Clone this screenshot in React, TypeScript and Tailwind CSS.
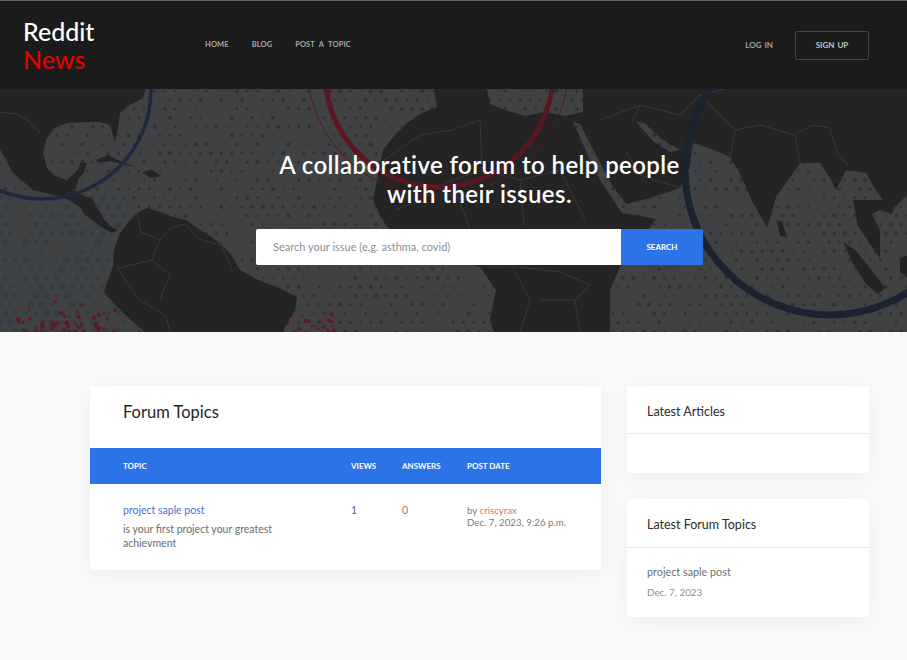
const font = "font-['Lato','Noto_Sans',sans-serif]";

// small seeded generator so the dot field is the same on every load
function rng(seed: number) {
  let s = seed;
  return () => {
    s = (s * 16807) % 2147483647;
    return s / 2147483647;
  };
}

type Dot = { x: number; y: number; r: number; fill: string };

function oceanDots(): Dot[] {
  const rand = rng(4177);
  const dots: Dot[] = [];
  for (let row = 0; row < 29; row++) {
    for (let col = 0; col < 90; col++) {
      const x = col * 10.3 + (row % 2 ? 5.15 : 0);
      const y = 91 + row * 8.9;
      const v = rand();
      const big = x < 130 && y > 190 ? 1.8 : 1;
      const r = v < 0.3 ? 0 : (0.8 + rand() * 1.3) * big;
      if (r === 0) continue;
      dots.push({ x, y, r, fill: big > 1 ? "#333d46" : "#2f3133" });
    }
  }
  return dots;
}

function splatter(): Dot[] {
  const rand = rng(991);
  const dots: Dot[] = [];
  for (let i = 0; i < 90; i++) {
    const left = i < 65;
    dots.push({
      x: left ? 18 + rand() * 100 : 285 + rand() * 50,
      y: left ? 332 - rand() * rand() * 36 : 332 - rand() * rand() * 22,
      r: 0.6 + rand() * 1.9,
      fill: "#5c1a26",
    });
  }
  return dots;
}

const ocean = oceanDots();
const blood = splatter();

function WorldMap() {
  return (
    <svg
      className="absolute inset-0 h-full w-full blur-[0.5px]"
      viewBox="0 89 907 243"
      preserveAspectRatio="none"
    >
      <rect x="-5" y="84" width="917" height="253" fill="#404142" />
      {ocean.map((d, i) => (
        <circle key={i} cx={d.x} cy={d.y} r={d.r} fill={d.fill} />
      ))}
      {blood.map((d, i) => (
        <circle key={i} cx={d.x} cy={d.y} r={d.r} fill={d.fill} />
      ))}
      <g fill="#242424">
        {/* north + central america */}
        <path d="M-5 84H147L143 98L128 106L120 113L118 128L115 143L110 125L100 122L90 122L67 123L54 128L46 140L43 153L47 168L55 176L67 180L78 170L80 163L87 163L84 172L78 180L75 190L84 196L92 198L97 207L103 218L110 226L118 230L112 233L100 226L92 220L84 214L80 207L63 197L33 190L13 173L-5 140Z" />
        <path d="M96 160L108 155L122 162L136 167L126 165L110 161L100 163Z" />
        <path d="M142 172L152 170L162 176L150 178Z" />
        {/* south america */}
        <path d="M120 233L130 220L137 213L147 208L160 212L173 217L186 220L200 230L216 240L230 253L240 270L258 280L277 287L297 297L295 310L290 318L280 337H170L150 337L120 310L104 292L108 280L113 267L114 250Z" />
        {/* africa + eurasia, seas cut out by even-odd */}
        <path
          fillRule="evenodd"
          d="M433 84L437 107L420 114L407 123L395 135L383 150L378 175L373 200L380 215L387 227L420 250L480 267L496 290L490 320L495 337H610L610 290L620 267L640 240L656 219L640 216L622 213L600 180L590 160L573 122L580 124L596 155L612 185L626 204L650 198L668 192L680 188L690 165L693 143L712 149L730 157L738 170L743 180L753 203L767 227L772 212L776 197L788 180L800 163L820 163L830 178L836 190L846 170L866 173L876 190L883 200L895 207L912 190V84ZM486 84H583L583 112L565 116L545 112L525 116L505 110L490 104ZM636 122L645 123L660 138L680 150L670 152L654 142Z"
        />
        {/* sri lanka, malay peninsula, sumatra, java */}
        <path d="M777 220L782 222L787 237L780 236Z" />
        <path d="M853 200H897L892 214L880 210L872 214L880 230L880 258L870 244L858 226Z" />
        <path d="M843 242L855 250L870 268L885 288L878 294L866 284L852 262Z" />
        <path d="M900 258L912 254V282L900 272Z" />
      </g>
      <g fill="none" stroke="#383838" strokeWidth="1">
        <path d="M0 112L17 114L30 122L40 133M65 197L73 190L86 196" />
        <path d="M137 213L141 232L160 240L170 228L186 224L197 238L222 246M160 240L152 260L118 268L128 285L140 300L166 316L170 332M152 260L170 275L160 300M222 246L232 270" />
        <path d="M384 160L420 135L452 130L480 120L482 170L452 180L420 200L395 210M482 170L520 180L560 170L590 160M452 180L470 230M520 180L524 225M560 170L585 220" />
        <path d="M480 267L512 266L560 272L590 285L575 300L580 332M512 266L530 300L520 332M540 300L575 300" />
        <path d="M600 120L640 105L680 115L700 95L725 89M625 150L640 175L680 188M640 105L632 122M700 95L735 130L730 157M735 130L760 125L795 135L812 125L830 128L838 155L848 165M795 135L800 163M860 175L870 195" />
      </g>
      <g fill="none">
        <circle cx="42" cy="90" r="109" stroke="#1f2841" strokeWidth="3.5" />
        <circle cx="439" cy="73" r="114" stroke="#591722" strokeWidth="5" />
        <circle cx="438" cy="65" r="131" stroke="#591722" strokeWidth="1" />
        <circle cx="830" cy="170" r="145" stroke="#1b2331" strokeWidth="7" />
      </g>
    </svg>
  );
}

function Header() {
  return (
    <header className="flex h-[89px] items-center border-t border-[#666666] bg-[#1b1b1b] pl-[23px] pr-[38px]">
      <a className="w-[182px] text-[25px] font-medium leading-[28px] text-white">
        Reddit
        <br />
        <span className="text-[#e60000]">News</span>
      </a>
      <nav className="flex gap-[23px] text-[7.5px] font-bold uppercase tracking-[0.1px] text-[#a8a8a8] [word-spacing:2.5px]">
        <a>Home</a>
        <a>Blog</a>
        <a>Post a topic</a>
      </nav>
      <div className="ml-auto flex items-center gap-[22px] text-[8px] font-bold uppercase [word-spacing:1px]">
        <a className="text-[#a0a0a0]">Log in</a>
        <a className="flex h-[29px] w-[74px] items-center justify-center rounded-[2px] border-[1.5px] border-[#444444] text-[#c4c4c4]">
          Sign up
        </a>
      </div>
    </header>
  );
}

function Hero() {
  return (
    <section className="relative h-[243px] overflow-hidden">
      <WorldMap />
      <div className="relative ml-[256px] w-[447px] pt-[61px]">
        <h1 className="whitespace-nowrap text-center text-[24px] font-semibold leading-[29px] tracking-[0.4px] text-white">
          A collaborative forum to help people
          <br />
          with their issues.
        </h1>
        <form className="mt-[21px] flex h-[36px] overflow-hidden rounded-[2px]">
          <div className="flex flex-1 items-center bg-white pl-[17px] text-[11px] text-[#8f8f8f]">
            Search your issue (e.g. asthma, covid)
          </div>
          <button
            type="button"
            className="w-[82px] bg-[#2c73e8] text-[8px] font-bold uppercase text-white"
          >
            Search
          </button>
        </form>
      </div>
    </section>
  );
}

function TopicsCard() {
  return (
    <div className="h-[184px] w-[511px] rounded-[2px] bg-white shadow-[0_4px_24px_rgba(0,0,0,0.05)]">
      <h2 className="flex h-[62px] items-start pl-[33px] pt-[15px] text-[16.5px] leading-[22px] text-[#1f1f1f]">
        Forum Topics
      </h2>
      <div className="grid h-[36px] grid-cols-[228px_51px_65px_1fr] items-center bg-[#2c73e8] pl-[33px] text-[8px] font-bold uppercase text-white">
        <span>Topic</span>
        <span>Views</span>
        <span>Answers</span>
        <span>Post date</span>
      </div>
      <div className="grid grid-cols-[228px_51px_65px_1fr] pl-[33px] pt-[19px] text-[10.5px] leading-[14px]">
        <div>
          <a className="text-[#4a6fd0]">project saple post</a>
          <p className="mt-[5px] w-[170px] text-[#6b6b6b]">
            is your first project your greatest achievment
          </p>
        </div>
        <span className="text-[#52678a]">1</span>
        <span className="text-[#8a8256]">0</span>
        <div className="mt-[1px] text-[9.7px] leading-[12px] text-[#7b7b7b]">
          by <a className="text-[#d4785f]">criscyrax</a>
          <br />
          Dec. 7, 2023, 9:26 p.m.
        </div>
      </div>
    </div>
  );
}

export default function App() {
  return (
    <div className={`${font} h-[660px] overflow-hidden bg-[#f9f9f9]`}>
      <Header />
      <Hero />
      <main className="flex gap-[26px] pl-[90px] pt-[54px]">
        <TopicsCard />
        <aside className="flex w-[242px] flex-col gap-[26px]">
          <div className="rounded-[2px] bg-white shadow-[0_4px_24px_rgba(0,0,0,0.05)]">
            <h3 className="h-[48px] border-b border-[#ebebeb] pl-[20px] pt-[15px] text-[12.5px] leading-[21px] text-[#2b2b2b]">
              Latest Articles
            </h3>
            <div className="h-[39px]" />
          </div>
          <div className="rounded-[2px] bg-white shadow-[0_4px_24px_rgba(0,0,0,0.05)]">
            <h3 className="h-[49px] border-b border-[#ebebeb] pl-[20px] pt-[15px] text-[12.5px] leading-[21px] text-[#2b2b2b]">
              Latest Forum Topics
            </h3>
            <div className="h-[69px] pl-[20px] pt-[17px]">
              <a className="block text-[10.8px] leading-[14px] text-[#6f6f6f]">project saple post</a>
              <span className="mt-[6px] block text-[9.8px] leading-[14px] text-[#8f8f8f]">Dec. 7, 2023</span>
            </div>
          </div>
        </aside>
      </main>
    </div>
  );
}
